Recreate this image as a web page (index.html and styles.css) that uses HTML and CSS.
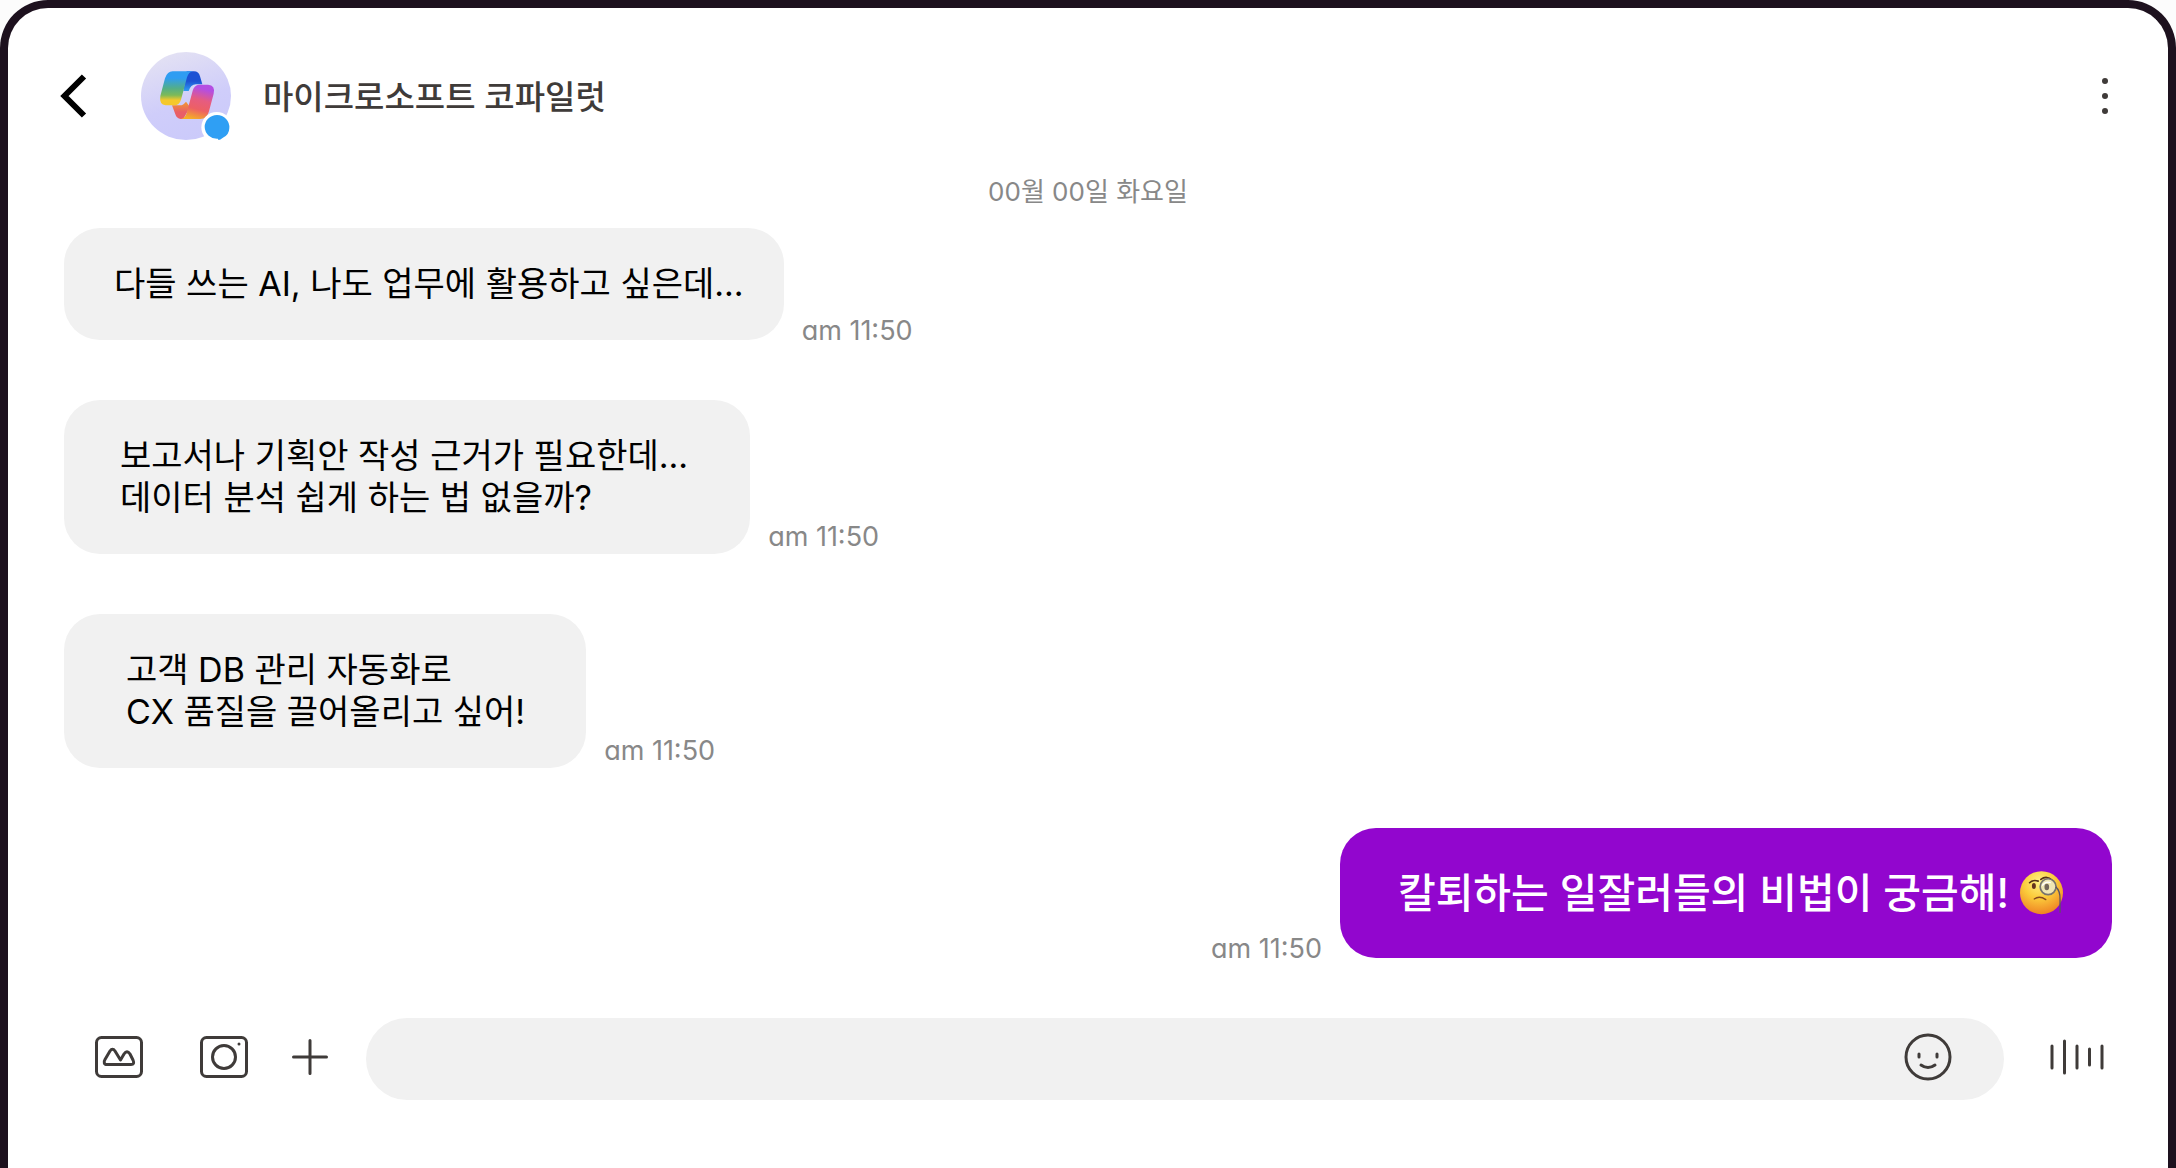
FILE: index.html
```html
<!DOCTYPE html>
<html lang="ko">
<head>
<meta charset="utf-8">
<meta name="viewport" content="width=device-width, initial-scale=1">
<title>마이크로소프트 코파일럿</title>
<link rel="stylesheet" href="styles.css">
</head>
<body>
<div class="device">
  <header class="header">
    <button class="icon-button back" type="button" aria-label="뒤로">
      <svg width="28" height="44" viewBox="0 0 28 44"><path d="M24 2.500 4.500 22 24 41.500" fill="none" stroke="#000" stroke-width="6"/></svg>
    </button>
    <div class="avatar">
      <svg width="90" height="88" viewBox="33 35 270 264" aria-hidden="true">
        <defs>
          <linearGradient id="bg" x1="0.250" y1="0" x2="0.600" y2="1"><stop offset="0" stop-color="#e4e2f3"/><stop offset="0.600" stop-color="#cfcdfa"/><stop offset="1" stop-color="#cbcafa"/></linearGradient>
          <linearGradient id="left" x1="0" y1="0" x2="0" y2="1"><stop offset="0.200" stop-color="#2f9df2"/><stop offset="0.500" stop-color="#53ae88"/><stop offset="0.700" stop-color="#7dba58"/><stop offset="0.850" stop-color="#f5c82c"/></linearGradient>
          <linearGradient id="right" x1="0.600" y1="0" x2="0.350" y2="1"><stop offset="0.100" stop-color="#b44ee2"/><stop offset="0.420" stop-color="#e65c80"/><stop offset="0.700" stop-color="#ed6064"/><stop offset="1" stop-color="#f5ae27"/></linearGradient>
          <linearGradient id="foldTop" x1="0" y1="0" x2="0" y2="1"><stop offset="0.500" stop-color="#1c51d4"/><stop offset="1" stop-color="#2f9df2"/></linearGradient>
          <linearGradient id="foldBottom" x1="0" y1="0" x2="0" y2="1"><stop offset="0" stop-color="#f29a30"/><stop offset="0.600" stop-color="#e95e67"/></linearGradient>
        </defs>
        <ellipse cx="168" cy="167" rx="135" ry="132" fill="url(#bg)"/>
        <path d="M170 93H192Q206 93 210 108L217 132H198Q182 133 176 152L160 152Z" fill="url(#foldTop)"/>
        <path d="M126 195H150Q160 195 168 184L180 200 160 236H152Q140 235 136 222Z" fill="url(#foldBottom)"/>
        <path d="M128 93H188Q176 95 171 111L153 178Q148 195 133 195H107Q87 193 91 167L105 114Q112 93 128 93Z" fill="url(#left)"/>
        <path d="M207 133H234Q257 135 251 160L237 213Q231 236 211 236H153Q165 234 170 219L188 151Q193 134 207 133Z" fill="url(#right)"/>
        <circle cx="260" cy="261" r="46" fill="#fff"/>
        <path d="M261 224A38 37 0 0 1 298 264Q297 283 281 291L270 298H264V295A37 36 0 0 1 224 260A37 36 0 0 1 261 224Z" fill="#2f9ff4"/>
      </svg>
    </div>
    <h1 class="title">마이크로소프트 코파일럿</h1>
    <button class="icon-button menu" type="button" aria-label="메뉴">
      <svg width="14" height="40" viewBox="0 0 14 40" fill="#3f3b39"><circle cx="7" cy="5" r="3"/><circle cx="7" cy="20" r="3"/><circle cx="7" cy="35" r="3"/></svg>
    </button>
  </header>
  <main class="chat">
    <p class="date">00월 00일 화요일</p>
    <div class="message">
      <p class="bubble">다들 쓰는 AI, 나도 업무에 활용하고 싶은데...</p>
      <time class="time time-low">am 11:50</time>
    </div>
    <div class="message">
      <p class="bubble bubble-medium">보고서나 기획안 작성 근거가 필요한데...<br>데이터 분석 쉽게 하는 법 없을까?</p>
      <time class="time">am 11:50</time>
    </div>
    <div class="message">
      <p class="bubble bubble-small">고객 DB 관리 자동화로<br>CX 품질을 끌어올리고 싶어!</p>
      <time class="time">am 11:50</time>
    </div>
    <div class="message mine">
      <time class="time time-low">am 11:50</time>
      <p class="bubble bubble-mine">칼퇴하는 일잘러들의 비법이 궁금해!
        <svg width="45" height="46" viewBox="58 56 136 138" role="img" aria-label="외알 안경을 쓴 얼굴">
          <defs><radialGradient id="face" cx="0.450" cy="0.250" r="0.750"><stop offset="0" stop-color="#fff184"/><stop offset="0.500" stop-color="#fbcb3b"/><stop offset="1" stop-color="#ef8424"/></radialGradient></defs>
          <circle cx="126" cy="124" r="65" fill="url(#face)"/>
          <path d="M90 94Q100 84 116 89" fill="none" stroke="#53301a" stroke-width="5" stroke-linecap="round"/>
          <path d="M124 84Q142 70 160 88" fill="none" stroke="#53301a" stroke-width="5" stroke-linecap="round"/>
          <ellipse cx="103" cy="104" rx="6" ry="9" fill="#64331e"/>
          <circle cx="146" cy="106" r="24" fill="#efe6b4" stroke="#77736e" stroke-width="5"/>
          <path d="M128 103Q138 88 154 94" fill="none" stroke="#fff" stroke-width="4"/>
          <ellipse cx="142" cy="107" rx="7" ry="10" fill="#74675b"/>
          <path d="M104 143Q120 132 139 145" fill="none" stroke="#85451e" stroke-width="4" stroke-linecap="round"/>
          <path d="M169 106Q183 118 182 145V185" fill="none" stroke="#5c5362" stroke-width="4"/>
        </svg></p>
    </div>
  </main>
  <form class="composer">
    <button class="icon-button" type="button" aria-label="사진">
      <svg class="line" width="48" height="42" viewBox="0 0 48 42"><rect x="1.500" y="1.500" width="45" height="39" rx="5"/><path d="M12 28.500C9 28.500 8.500 26 10 23.500L15 15Q17.500 11.500 20 15L25.500 24 29 18Q32 13.500 35 18L38 24Q40 28.500 36 28.500Z"/></svg>
    </button>
    <button class="icon-button camera" type="button" aria-label="카메라">
      <svg class="line" width="48" height="42" viewBox="0 0 48 42"><rect x="1.500" y="1.500" width="45" height="39" rx="5"/><circle cx="24" cy="21" r="11.500"/><circle class="solid" cx="39" cy="8" r="1.500"/></svg>
    </button>
    <button class="icon-button plus" type="button" aria-label="추가">
      <svg class="line" width="36" height="36" viewBox="0 0 36 36"><path d="M18 1.500V34.500M1.500 18H34.500"/></svg>
    </button>
    <div class="field">
      <input class="field-input" type="text" aria-label="메시지 입력">
      <button class="icon-button" type="button" aria-label="이모티콘">
        <svg class="line" width="48" height="48" viewBox="0 0 48 48"><circle cx="24" cy="24" r="22"/><path d="M15 21V24M33 21V24M17 32Q24 37 31 32"/></svg>
      </button>
    </div>
    <button class="icon-button voice" type="button" aria-label="음성 입력">
      <svg class="line" width="54" height="36" viewBox="0 0 54 36"><path d="M2 7V29M14.500 2V34M27 7V29M39.500 10V26M52 7V29"/></svg>
    </button>
  </form>
</div>
</body>
</html>
```
FILE: styles.css
```css
* {
  box-sizing: border-box;
}

body {
  margin: 0;
  background: #fcfcfc;
  font-family: Inter, "Noto Sans CJK KR", sans-serif;
  color: #000;
}

h1,
p {
  margin: 0;
}

.device {
  min-height: 100vh;
  padding: 44px 56px 0;
  border: 8px solid #1d111e;
  border-bottom: 0;
  border-radius: 48px 48px 0 0;
  background: #fff;
}

.icon-button {
  display: flex;
  flex-shrink: 0;
  padding: 0;
  border: 0;
  background: none;
  cursor: pointer;
}

.header {
  display: flex;
  align-items: center;
  height: 88px;
}

.back {
  margin-left: -4px;
}

.avatar {
  display: flex;
  margin: 0 32px 0 53px;
}

.title {
  padding-top: 2px;
  font-size: 33px;
  font-weight: 500;
  line-height: 48px;
  color: #3f3b39;
}

.menu {
  margin-left: auto;
}

.chat {
  display: flex;
  flex-direction: column;
  gap: 60px;
  padding-top: 34px;
}

.date {
  margin-bottom: -42px;
  font-size: 26px;
  line-height: 36px;
  text-align: center;
  color: #888;
}

.message {
  display: flex;
  align-items: flex-end;
  gap: 18px;
}

.bubble {
  padding: 35px 40px 35px 50px;
  border-radius: 36px;
  background: #f1f1f1;
  font-size: 34px;
  line-height: 42px;
}

.bubble-medium {
  padding: 35px 62px 35px 56px;
}

.bubble-small {
  padding: 35px 61px 35px 62px;
}

.mine {
  justify-content: flex-end;
}

.bubble-mine {
  display: flex;
  align-items: center;
  gap: 10px;
  padding: 42px 48px 42px 58px;
  background: #9206ce;
  color: #fff;
  font-size: 41px;
  font-weight: 500;
  line-height: 46px;
}

.time {
  padding-bottom: 1px;
  font-size: 27px;
  line-height: 32px;
  font-feature-settings: "cv11";
  color: #888;
}

.time-low {
  margin-bottom: -8px;
}

.composer {
  display: flex;
  align-items: center;
  padding: 60px 0 68px 31px;
}

.composer .icon-button {
  padding-bottom: 4px;
}

.line {
  fill: none;
  stroke: #3f3b39;
  stroke-width: 3;
  stroke-linecap: round;
  stroke-linejoin: round;
}

.line .solid {
  fill: #3f3b39;
  stroke: none;
}

.camera {
  margin-left: 57px;
}

.plus {
  margin: 0 38px 0 44px;
}

.field {
  display: flex;
  flex: 1;
  align-items: center;
  height: 82px;
  padding: 0 52px 0 40px;
  border-radius: 41px;
  background: #f1f1f1;
}

.field-input {
  flex: 1;
  min-width: 0;
  height: 100%;
  padding: 0;
  border: 0;
  outline: 0;
  background: none;
  font: inherit;
  font-size: 34px;
}

.voice {
  margin: 0 8px 0 46px;
}
```
